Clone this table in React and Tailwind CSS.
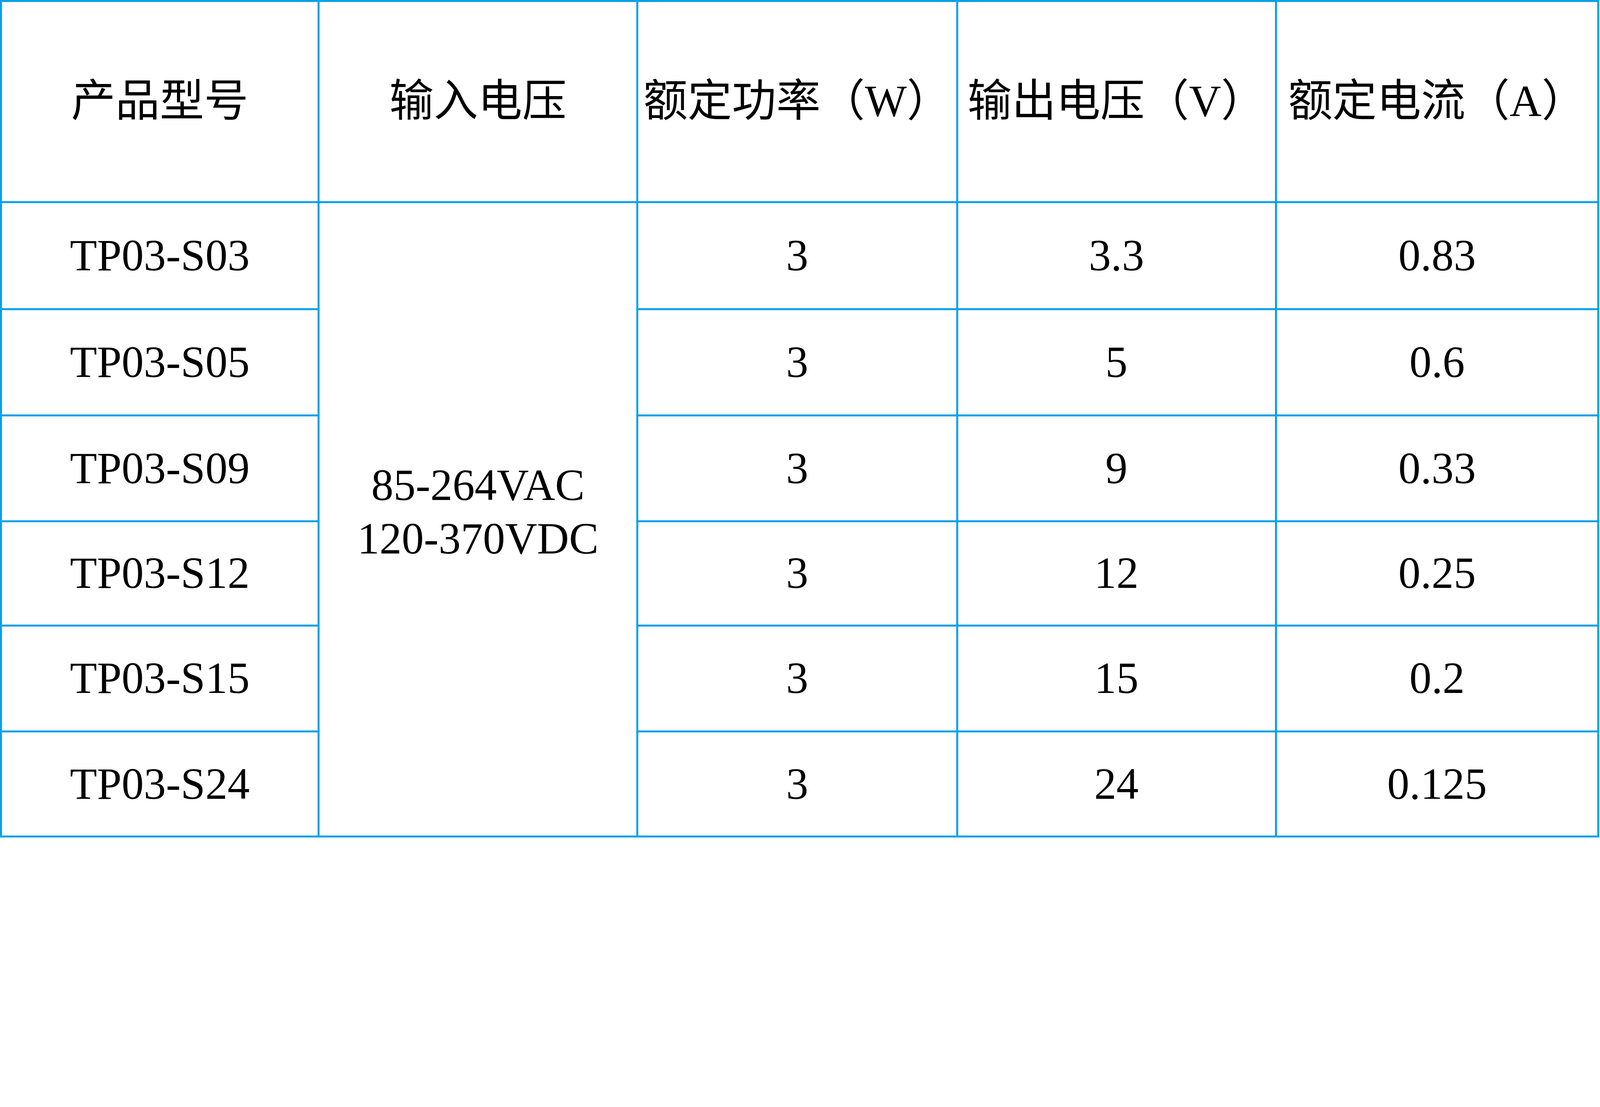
const ROWS = [
  { model: "TP03-S03", power: "3", vout: "3.3", iout: "0.83", h: "h-[6.708vw]" },
  { model: "TP03-S05", power: "3", vout: "5", iout: "0.6", h: "h-[6.635vw]" },
  { model: "TP03-S09", power: "3", vout: "9", iout: "0.33", h: "h-[6.616vw]" },
  { model: "TP03-S12", power: "3", vout: "12", iout: "0.25", h: "h-[6.505vw]" },
  { model: "TP03-S15", power: "3", vout: "15", iout: "0.2", h: "h-[6.635vw]" },
  { model: "TP03-S24", power: "3", vout: "24", iout: "0.125", h: "h-[6.561vw]" },
];

const HEADERS = ["产品型号", "输入电压", "额定功率（W）", "输出电压（V）", "额定电流（A）"];

// everything is sized in vw so the table keeps its proportions at any zoom
const cell =
  "border-r-[0.125vw] border-b-[0.125vw] border-[#00a0e9] p-0 text-center align-middle";

export default function App() {
  return (
    <div className="w-screen h-[52.37vw] overflow-hidden bg-white text-black font-['Liberation_Serif','Noto_Sans_CJK_SC',serif] text-[2.77vw] leading-none">
      <table className="w-[99.96vw] table-fixed border-separate border-spacing-0 border-l-[0.125vw] border-t-[0.125vw] border-[#00a0e9]">
        <colgroup>
          <col className="w-[19.85vw]" />
          <col className="w-[19.92vw]" />
          <col className="w-[19.98vw]" />
          <col className="w-[19.92vw]" />
          <col className="w-[20.16vw]" />
        </colgroup>
        <thead>
          <tr className="h-[12.567vw]">
            {HEADERS.map((h) => (
              <th key={h} className={`${cell} font-normal whitespace-nowrap`}>
                {h}
              </th>
            ))}
          </tr>
        </thead>
        <tbody>
          {ROWS.map((r, i) => (
            <tr key={r.model} className={r.h}>
              <td className={cell}>{r.model}</td>
              {i === 0 ? (
                <td rowSpan={ROWS.length} className={`${cell} pb-[0.92vw] leading-[3.33vw]`}>
                  85-264VAC
                  <br />
                  120-370VDC
                </td>
              ) : null}
              <td className={cell}>{r.power}</td>
              <td className={cell}>{r.vout}</td>
              <td className={cell}>{r.iout}</td>
            </tr>
          ))}
        </tbody>
      </table>
    </div>
  );
}
